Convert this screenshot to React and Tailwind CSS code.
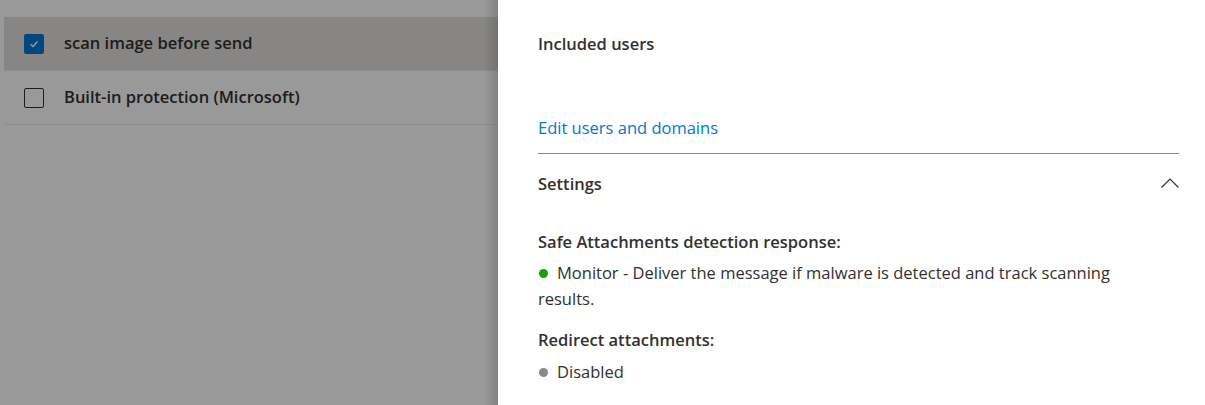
import React from "react";

const policies = [
  { id: 1, name: "scan image before send", checked: true },
  { id: 2, name: "Built-in protection (Microsoft)", checked: false },
];

function Checkbox({ checked }) {
  if (checked) {
    return (
      <div className="w-5 h-5 rounded-[2px] bg-[#0078d4] flex items-center justify-center">
        <svg width="12" height="12" viewBox="0 0 12 12" fill="none">
          <path d="M2.5 6.2 L5 8.5 L9.5 3.5" stroke="white" strokeWidth="1.3" />
        </svg>
      </div>
    );
  }
  return <div className="w-5 h-5 rounded-[2px] border border-[#323130] bg-white" />;
}

function Bullet({ color, children }) {
  return (
    <div className="text-[#323130] leading-[26px]">
      <span className={`inline-block w-[9px] h-[9px] rounded-full mr-[9px] ml-[1px] align-[1px] ${color}`} />
      {children}
    </div>
  );
}

export default function App() {
  return (
    <div
      className="w-[1205px] h-[405px] flex overflow-hidden bg-white text-[16.5px]"
      style={{ fontFamily: '"Segoe UI", "Open Sans", sans-serif' }}
    >
      {/* policy list, dimmed behind the flyout */}
      <div className="relative w-[498px] shrink-0 pt-[17px] pl-1">
        {policies.map((p) => (
          <div
            key={p.id}
            className={`h-[54px] flex items-center pl-5 border-b border-[#edebe9] ${p.checked ? "bg-[#e1dfdd]" : ""}`}
          >
            <Checkbox checked={p.checked} />
            <span className="ml-5 font-semibold text-[#323130]">{p.name}</span>
          </div>
        ))}
        <div className="absolute inset-0 bg-black/40" />
        <div className="absolute top-0 right-0 h-full w-[14px] bg-gradient-to-r from-transparent to-black/15" />
      </div>

      {/* flyout panel */}
      <div className="flex-1 bg-white pl-10 pr-[26px]">
        <div className="pt-[31px] font-semibold text-[#323130] leading-[26px]">Included users</div>
        <div className="mt-[58px] text-[#0078d4] leading-[26px]">Edit users and domains</div>
        <div className="mt-[12px] border-t border-[#8a8886]" />
        <div className="flex items-center justify-between h-[60px] pt-[1px]">
          <span className="font-semibold text-[#323130]">Settings</span>
          <svg width="18" height="10" viewBox="0 0 18 10" fill="none" className="mb-[4px]">
            <path d="M0.5 9.5 L9 1 L17.5 9.5" stroke="#323130" strokeWidth="1.2" />
          </svg>
        </div>
        <div className="mt-[15px] font-semibold text-[#323130] leading-[26px]">
          Safe Attachments detection response:
        </div>
        <div className="mt-[5px] pr-[40px]">
          <Bullet color="bg-[#13a10e]">
            Monitor - Deliver the message if malware is detected and track scanning results.
          </Bullet>
        </div>
        <div className="mt-[15px] font-semibold text-[#323130] leading-[26px]">Redirect attachments:</div>
        <div className="mt-[6px]">
          <Bullet color="bg-[#8a8886]">Disabled</Bullet>
        </div>
      </div>
    </div>
  );
}
